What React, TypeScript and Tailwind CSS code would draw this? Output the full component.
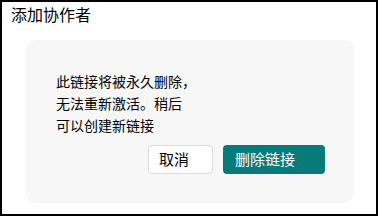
export default function App() {
  return (
    <div
      className="w-[378px] h-[216px] border-2 border-black bg-white text-black"
      style={{ fontFamily: '"Noto Sans CJK SC", "Noto Sans", sans-serif' }}
    >
      <h1 className="pl-[9px] pt-[1px] text-[16px] leading-[22px] font-normal">添加协作者</h1>

      <div className="ml-[24px] mt-[15px] w-[328px] h-[163px] rounded-[10px] bg-[#f7f7f7] pl-[30px] pr-[29px] pt-[30px] flex flex-col">
        <p className="text-[14px] leading-[22px]">
          此链接将被永久删除，
          <br />
          无法重新激活。稍后
          <br />
          可以创建新链接
        </p>
        <div className="mt-auto mb-[29px] flex justify-end gap-[10px]">
          <button className="w-[65px] h-[29px] rounded-[4px] border border-[#dcdcdc] bg-white text-[15px] text-left pl-[10px]">
            取消
          </button>
          <button className="w-[102px] h-[29px] rounded-[4px] bg-[#077a7a] text-white text-[15px] text-left pl-[12px]">
            删除链接
          </button>
        </div>
      </div>
    </div>
  )
}
